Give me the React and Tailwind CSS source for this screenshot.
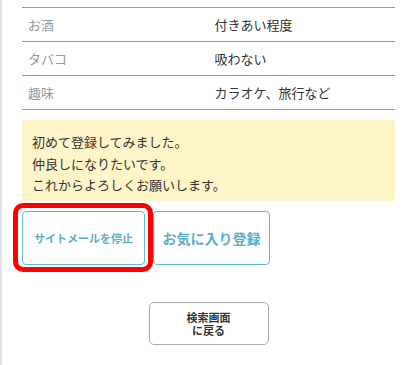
const rows = [
  { label: "お酒", value: "付きあい程度" },
  { label: "タバコ", value: "吸わない" },
  { label: "趣味", value: "カラオケ、旅行など" },
];

const font = { fontFamily: '"Noto Sans CJK JP", "Noto Sans", sans-serif' };

export default function App() {
  return (
    <div className="w-[415px] h-[365px] bg-white overflow-hidden" style={font}>
      <div className="h-full border-l-2 border-[#e3e3e3] pl-[20px] pt-[7px]">
        <div className="w-[373px]">
          {/* profile table */}
          <div className="border-t border-[#64a8c8]">
            {rows.map((r) => (
              <div key={r.label} className="flex h-[34px] items-center border-b border-[#64a8c8] text-[13px]">
                <div className="w-1/2 px-[6px] text-[#999999]">{r.label}</div>
                <div className="w-1/2 px-[6px] text-[#333333]">{r.value}</div>
              </div>
            ))}
          </div>

          {/* message */}
          <div className="mt-[10px] h-[81px] bg-[#fdf5c8] px-[10px] pt-[11px] text-[13px] leading-[21.5px] text-[#333333]">
            <p>初めて登録してみました。</p>
            <p>仲良しになりたいです。</p>
            <p>これからよろしくお願いします。</p>
          </div>

          {/* actions */}
          <div className="mt-[10px] flex gap-[8px]">
            <div className="relative">
              <button className="flex h-[54px] w-[123px] items-center justify-center rounded-[4px] border border-[#62bcd0] bg-white text-[11px] font-bold text-[#5aaec6]">
                サイトメールを停止
              </button>
              <div className="pointer-events-none absolute -top-[8px] -left-[9px] -right-[8px] -bottom-[7px] rounded-[10px] border-[5px] border-[#ff0000]"></div>
            </div>
            <button className="flex h-[54px] w-[117px] items-center justify-center rounded-[4px] border border-[#62bcd0] bg-white text-[14px] font-bold text-[#5aaec6]">
              お気に入り登録
            </button>
          </div>

          <div className="mt-[37px] flex justify-center">
            <button className="flex h-[43px] w-[120px] flex-col items-center justify-center rounded-[5px] border border-[#aaaaaa] bg-white text-[11px] font-bold leading-[13px] text-[#333333]">
              <span>検索画面</span>
              <span>に戻る</span>
            </button>
          </div>
        </div>
      </div>
    </div>
  );
}
